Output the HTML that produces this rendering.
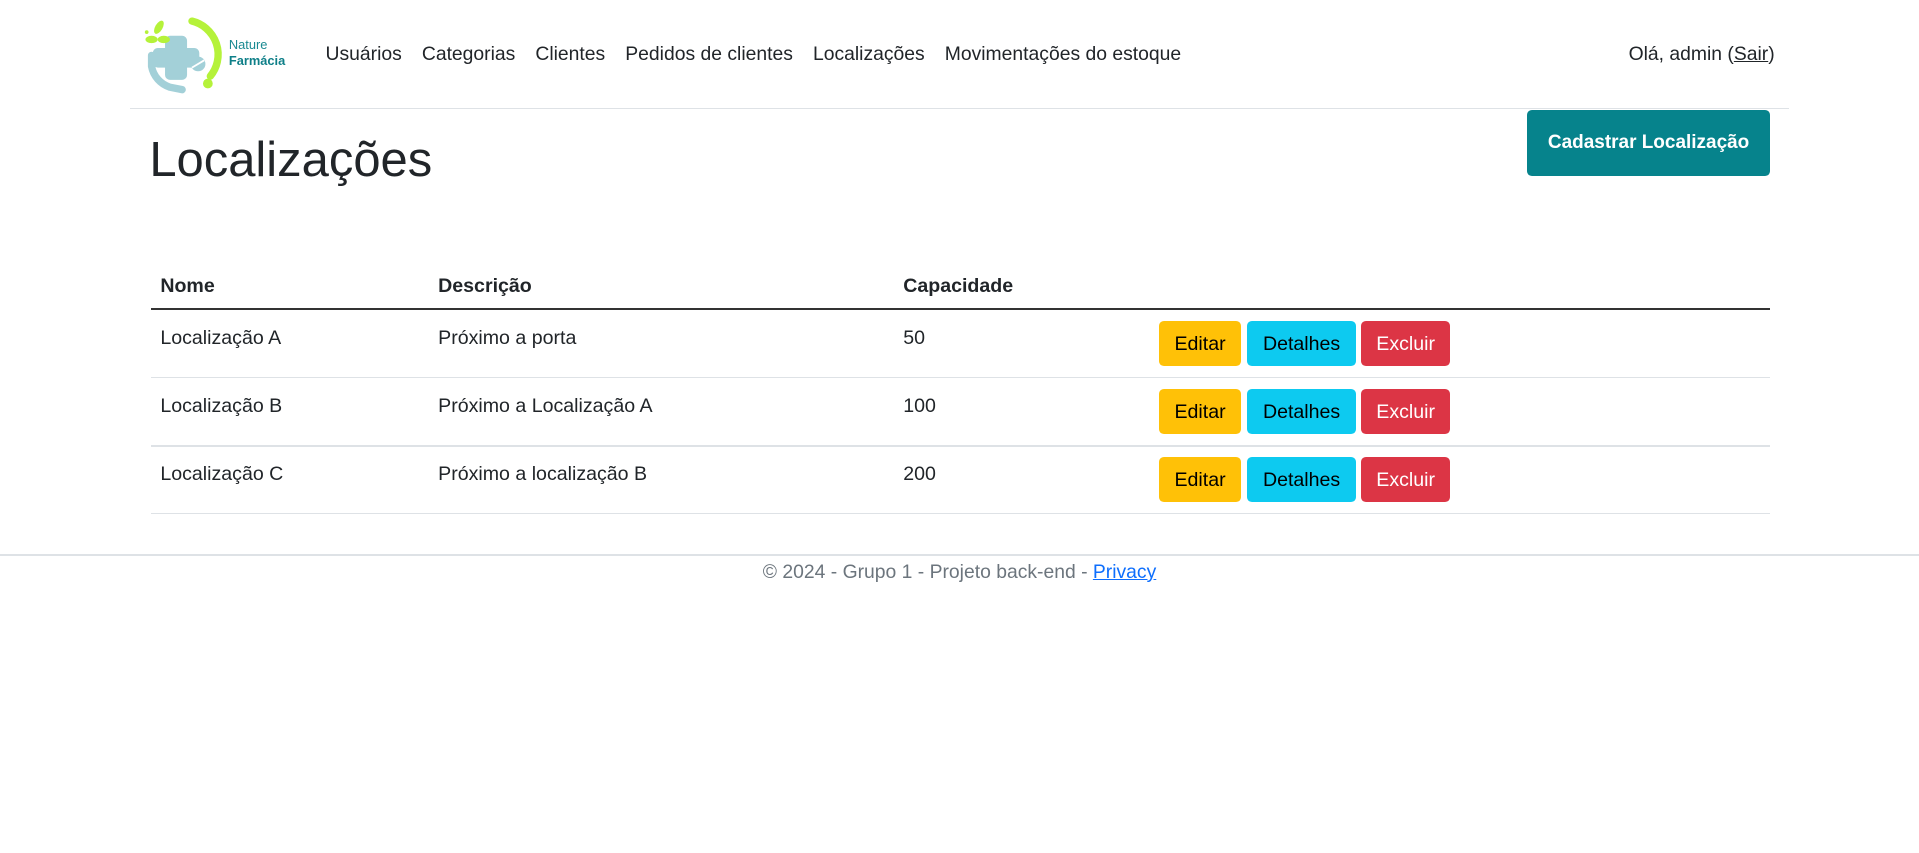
<!DOCTYPE html>
<html><head><meta charset="utf-8"><style>
html,body{margin:0;padding:0;background:#fff}
body{zoom:1.2239;width:1568px;height:697px;position:relative;overflow:hidden;font-family:"Segoe UI","Liberation Sans",sans-serif;color:#212529;font-size:16px}
.a{position:absolute;white-space:nowrap}
.nav{position:absolute;top:36px;left:266px;font-size:15.8px;color:#212529}
.nav span{margin-right:12px}
.hr{position:absolute;height:1px;background:#dee2e6}
.btn{position:absolute;height:37px;line-height:38px;border-radius:4px;text-align:center;font-size:16px}
.th{position:absolute;top:225px;font-weight:bold}
.td{position:absolute}
</style></head><body>
<svg class="a" style="left:117px;top:12px" width="70" height="66" viewBox="0 0 70 66">
 <path d="M40 5 A28 28 0 0 1 55 50" stroke="#b5f23a" stroke-width="6" fill="none" stroke-linecap="round"/>
 <path d="M7 33 L7 42 A22 22 0 0 0 22 59 L32 61" stroke="#a3d0d8" stroke-width="6" fill="none" stroke-linecap="round"/>
 <path d="M22 17 h10 a4 4 0 0 1 4 4 v6 h6 a4 4 0 0 1 4 4 v8 a4 4 0 0 1 -4 4 h-6 v6 a4 4 0 0 1 -4 4 h-10 a4 4 0 0 1 -4 -4 v-6 h-6 a4 4 0 0 1 -4 -4 v-8 a4 4 0 0 1 4 -4 h6 v-6 a4 4 0 0 1 4 -4z" fill="#a3d0d8"/>
 <circle cx="45" cy="40" r="6" fill="#a3d0d8"/><path d="M40 43 L50 37" stroke="#fff" stroke-width="1.5"/>
 <circle cx="53" cy="56" r="4" fill="#b5f23a"/>
 <ellipse cx="13" cy="10" rx="3" ry="6" fill="#b5f23a" transform="rotate(30 13 10)"/>
 <ellipse cx="7" cy="20" rx="5" ry="3" fill="#b5f23a"/>
 <ellipse cx="17" cy="20" rx="5" ry="3" fill="#b5f23a"/>
 <circle cx="3" cy="14" r="1.5" fill="#b5f23a"/>
</svg>
<div class="a" style="left:187px;top:30px;font-size:10.5px;color:#1a8a92;font-family:'Liberation Sans',sans-serif">Nature</div>
<div class="a" style="left:187px;top:43px;font-size:10.5px;color:#0e7f88;font-weight:bold;font-family:'Liberation Sans',sans-serif">Farmácia</div>
<div class="nav"><span>Usuários</span> <span>Categorias</span> <span>Clientes</span> <span>Pedidos de clientes</span> <span>Localizações</span> <span>Movimentações do estoque</span></div>
<div class="a" style="right:118px;top:36px;font-size:15.8px">Olá, admin (<u>Sair</u>)</div>
<div class="hr" style="left:106px;width:1356px;top:88px"></div>
<div class="a" style="left:122px;top:108px;font-size:40px">Localizações</div>
<div class="btn" style="left:1248px;top:90px;width:198px;height:54px;line-height:54px;background:#06838c;color:#fff;font-weight:bold;border-radius:4px;font-size:15.5px">Cadastrar Localização</div>
<div class="th" style="left:131px">Nome</div>
<div class="th" style="left:358px">Descrição</div>
<div class="th" style="left:738px">Capacidade</div>
<div class="hr" style="left:123px;width:1323px;top:252px;height:1.5px;background:#333"></div>

<div class="td" style="left:131px;top:267px">Localização A</div>
<div class="td" style="left:358px;top:267px">Próximo a porta</div>
<div class="td" style="left:738px;top:267px">50</div>
<div class="btn" style="left:947px;top:262px;width:67px;background:#ffc107;color:#000">Editar</div>
<div class="btn" style="left:1019px;top:262px;width:89px;background:#0dcaf0;color:#000">Detalhes</div>
<div class="btn" style="left:1112px;top:262px;width:73px;background:#dc3545;color:#fff">Excluir</div>
<div class="hr" style="left:123px;width:1323px;top:308px"></div>

<div class="td" style="left:131px;top:323px">Localização B</div>
<div class="td" style="left:358px;top:323px">Próximo a Localização A</div>
<div class="td" style="left:738px;top:323px">100</div>
<div class="btn" style="left:947px;top:318px;width:67px;background:#ffc107;color:#000">Editar</div>
<div class="btn" style="left:1019px;top:318px;width:89px;background:#0dcaf0;color:#000">Detalhes</div>
<div class="btn" style="left:1112px;top:318px;width:73px;background:#dc3545;color:#fff">Excluir</div>
<div class="hr" style="left:123px;width:1323px;top:364px"></div>

<div class="td" style="left:131px;top:378px">Localização C</div>
<div class="td" style="left:358px;top:378px">Próximo a localização B</div>
<div class="td" style="left:738px;top:378px">200</div>
<div class="btn" style="left:947px;top:373px;width:67px;background:#ffc107;color:#000">Editar</div>
<div class="btn" style="left:1019px;top:373px;width:89px;background:#0dcaf0;color:#000">Detalhes</div>
<div class="btn" style="left:1112px;top:373px;width:73px;background:#dc3545;color:#fff">Excluir</div>
<div class="hr" style="left:123px;width:1323px;top:419px"></div>

<div class="hr" style="left:0;width:1568px;top:453px"></div>
<div class="a" style="left:0;width:1568px;text-align:center;top:459px;color:#6c757d;font-size:15.8px">© 2024 - Grupo 1 - Projeto back-end - <u style="color:#0d6efd">Privacy</u></div>
</body></html>
